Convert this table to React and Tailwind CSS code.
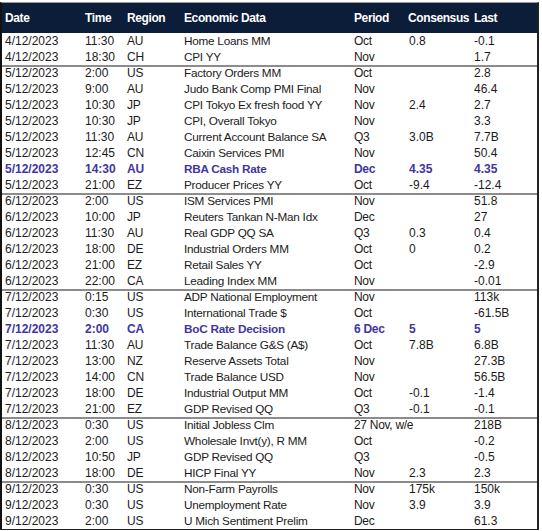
import React from 'react'

const rows = [
  ['4/12/2023', '11:30', 'AU', 'Home Loans MM', 'Oct', '0.8', '-0.1'],
  ['4/12/2023', '18:30', 'CH', 'CPI YY', 'Nov', '', '1.7'],
  ['5/12/2023', '2:00', 'US', 'Factory Orders MM', 'Oct', '', '2.8', 'g'],
  ['5/12/2023', '9:00', 'AU', 'Judo Bank Comp PMI Final', 'Nov', '', '46.4'],
  ['5/12/2023', '10:30', 'JP', 'CPI Tokyo Ex fresh food YY', 'Nov', '2.4', '2.7'],
  ['5/12/2023', '10:30', 'JP', 'CPI, Overall Tokyo', 'Nov', '', '3.3'],
  ['5/12/2023', '11:30', 'AU', 'Current Account Balance SA', 'Q3', '3.0B', '7.7B'],
  ['5/12/2023', '12:45', 'CN', 'Caixin Services PMI', 'Nov', '', '50.4'],
  ['5/12/2023', '14:30', 'AU', 'RBA Cash Rate', 'Dec', '4.35', '4.35', 'h'],
  ['5/12/2023', '21:00', 'EZ', 'Producer Prices YY', 'Oct', '-9.4', '-12.4'],
  ['6/12/2023', '2:00', 'US', 'ISM Services PMI', 'Nov', '', '51.8', 'g'],
  ['6/12/2023', '10:00', 'JP', 'Reuters Tankan N-Man Idx', 'Dec', '', '27'],
  ['6/12/2023', '11:30', 'AU', 'Real GDP QQ SA', 'Q3', '0.3', '0.4'],
  ['6/12/2023', '18:00', 'DE', 'Industrial Orders MM', 'Oct', '0', '0.2'],
  ['6/12/2023', '21:00', 'EZ', 'Retail Sales YY', 'Oct', '', '-2.9'],
  ['6/12/2023', '22:00', 'CA', 'Leading Index MM', 'Nov', '', '-0.01'],
  ['7/12/2023', '0:15', 'US', 'ADP National Employment', 'Nov', '', '113k', 'g'],
  ['7/12/2023', '0:30', 'US', 'International Trade $', 'Oct', '', '-61.5B'],
  ['7/12/2023', '2:00', 'CA', 'BoC Rate Decision', '6 Dec', '5', '5', 'h'],
  ['7/12/2023', '11:30', 'AU', 'Trade Balance G&S (A$)', 'Oct', '7.8B', '6.8B'],
  ['7/12/2023', '13:00', 'NZ', 'Reserve Assets Total', 'Nov', '', '27.3B'],
  ['7/12/2023', '14:00', 'CN', 'Trade Balance USD', 'Nov', '', '56.5B'],
  ['7/12/2023', '18:00', 'DE', 'Industrial Output MM', 'Oct', '-0.1', '-1.4'],
  ['7/12/2023', '21:00', 'EZ', 'GDP Revised QQ', 'Q3', '-0.1', '-0.1'],
  ['8/12/2023', '0:30', 'US', 'Initial Jobless Clm', '27 Nov, w/e', '', '218B', 'g'],
  ['8/12/2023', '2:00', 'US', 'Wholesale Invt(y), R MM', 'Oct', '', '-0.2'],
  ['8/12/2023', '10:50', 'JP', 'GDP Revised QQ', 'Q3', '', '-0.5'],
  ['8/12/2023', '18:00', 'DE', 'HICP Final YY', 'Nov', '2.3', '2.3'],
  ['9/12/2023', '0:30', 'US', 'Non-Farm Payrolls', 'Nov', '175k', '150k', 'g'],
  ['9/12/2023', '0:30', 'US', 'Unemployment Rate', 'Nov', '3.9', '3.9'],
  ['9/12/2023', '2:00', 'US', 'U Mich Sentiment Prelim', 'Dec', '', '61.3'],
]

const cols = 'grid grid-cols-[83px_42px_57px_170px_55px_65px_1fr]'

export default function App() {
  return (
    <div className="w-[542px] h-[531px] bg-white pt-[2px] overflow-hidden" style={{ fontFamily: '"Liberation Sans", Arial, sans-serif' }}>
      <div className="w-[539px] border-t border-b border-t-[#9a9a9a] border-b-[#222] border-l-2 border-r-2 border-l-[#111] border-r-[#222]">
        <div className={`${cols} h-[30px] items-center bg-[#0b1d38] text-white font-bold text-[12px] tracking-[-0.4px]`}>
          <div className="pl-[3px]">Date</div>
          <div>Time</div>
          <div>Region</div>
          <div>Economic Data</div>
          <div>Period</div>
          <div className="-ml-[1px]">Consensus</div>
          <div>Last</div>
        </div>
        {rows.map((r, i) => {
          const hl = r[7] === 'h'
          const g = r[7] === 'g'
          return (
            <div
              key={i}
              className={`${cols} h-4 leading-4 text-[12px] whitespace-nowrap ${hl ? 'font-bold text-[#4136a0]' : 'text-[#1b1b1b]'} ${g ? 'shadow-[inset_0_2px_0_#8c8c8c]' : ''}`}
            >
              <div className="pl-[3px]">{r[0]}</div>
              <div>{r[1]}</div>
              <div className="tracking-[-0.2px]">{r[2]}</div>
              <div className="text-[11.75px] tracking-[-0.25px]">{r[3]}</div>
              <div className="tracking-[-0.3px]">{r[4]}</div>
              <div>{r[5]}</div>
              <div>{r[6]}</div>
            </div>
          )
        })}
      </div>
    </div>
  )
}
